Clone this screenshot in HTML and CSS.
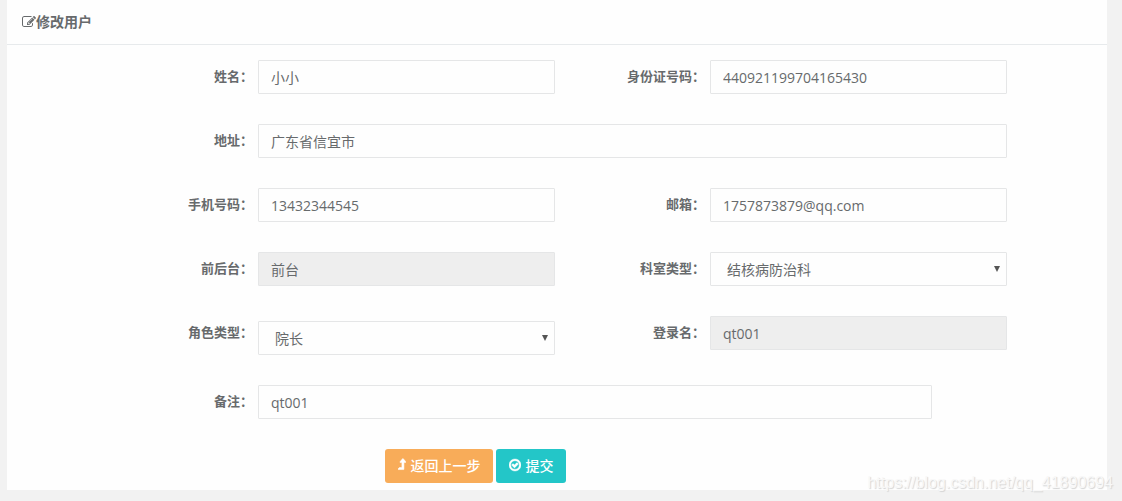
FILE: index.html
```html
<!DOCTYPE html>
<html lang="zh-CN">
<head>
<meta charset="utf-8">
<title>修改用户</title>
<link rel="stylesheet" href="styles.css">
</head>
<body>
<main class="panel">
  <header class="panel-head">
    <svg class="icon icon-edit" viewBox="0 0 1792 1792" aria-hidden="true"><path d="M888 1184l116-116-152-152-116 116v56h96v96h56zm440-720q-16-16-33 1l-350 350q-17 17-1 33t33-1l350-350q17-17 1-33zm80 594v190q0 119-84.5 203.5t-203.5 84.5h-832q-119 0-203.5-84.5t-84.5-203.5v-832q0-119 84.5-203.5t203.5-84.5h832q63 0 117 25 15 7 18 23 3 17-9 29l-49 49q-14 14-32 8-23-6-45-6h-832q-66 0-113 47t-47 113v832q0 66 47 113t113 47h832q66 0 113-47t47-113v-126q0-13 9-22l64-64q15-15 35-7t20 29zm-96-738l288 288-672 672h-288v-288zm444 132l-92 92-288-288 92-92q28-28 68-28t68 28l152 152q28 28 28 68t-28 68z"/></svg>
    <h1 class="title">修改用户</h1>
  </header>
  <form class="form">
    <div class="row">
      <label class="label" for="name">姓名：</label>
      <input class="control" id="name" type="text" value="小小">
      <label class="label" for="idcard">身份证号码：</label>
      <input class="control" id="idcard" type="text" value="440921199704165430">
    </div>
    <div class="row">
      <label class="label" for="address">地址：</label>
      <input class="control wide" id="address" type="text" value="广东省信宜市">
    </div>
    <div class="row">
      <label class="label" for="phone">手机号码：</label>
      <input class="control" id="phone" type="text" value="13432344545">
      <label class="label" for="email">邮箱：</label>
      <input class="control" id="email" type="text" value="1757873879@qq.com">
    </div>
    <div class="row">
      <label class="label" for="side">前后台：</label>
      <input class="control" id="side" type="text" value="前台" readonly>
      <label class="label" for="dept">科室类型：</label>
      <div class="select-box">
        <select class="control select" id="dept"><option>结核病防治科</option></select>
      </div>
    </div>
    <div class="row">
      <label class="label" for="role">角色类型：</label>
      <div class="select-box lowered">
        <select class="control select" id="role"><option>院长</option></select>
      </div>
      <label class="label" for="login">登录名：</label>
      <input class="control" id="login" type="text" value="qt001" readonly>
    </div>
    <div class="row">
      <label class="label" for="remark">备注：</label>
      <input class="control wide remark" id="remark" type="text" value="qt001">
    </div>
    <div class="actions">
      <button class="btn btn-back" type="button"><svg class="icon icon-up" viewBox="330 0 1024 1792" aria-hidden="true"><path d="M1337 547q-18 37-58 37h-192v864q0 14-9 23t-23 9h-704q-21 0-29-18-8-20 4-35l160-192q9-11 25-11h320v-640h-192q-40 0-58-37-17-37 9-68l320-384q18-22 49-22t49 22l320 384q27 32 9 68z"/></svg>返回上一步</button>
      <button class="btn btn-submit" type="submit"><svg class="icon icon-check" viewBox="128 0 1536 1792" aria-hidden="true"><path d="M1299 813l-422 422q-19 19-45 19t-45-19l-294-294q-19-19-19-45t19-45l102-102q19-19 45-19t45 19l147 147 275-275q19-19 45-19t45 19l102 102q19 19 19 45t-19 45zm141 83q0-148-73-273t-198-198-273-73-273 73-198 198-73 273 73 273 198 198 273 73 273-73 198-198 73-273zm224 0q0 209-103 385.5t-279.5 279.5-385.5 103-385.5-103-279.5-279.5-103-385.5 103-385.5 279.5-279.5 385.5-103 385.5 103 279.5 279.5 103 385.5z"/></svg>提交</button>
    </div>
  </form>
</main>
<div class="watermark">https://blog.csdn.net/qq_41890694</div>
</body>
</html>
```
FILE: styles.css
```css
* {
  box-sizing: border-box;
}

body {
  position: relative;
  margin: 0;
  padding: 0 15px 11px 7px;
  background: #f2f2f2;
  color: #676a6c;
  font-family: "Open Sans", "Noto Sans CJK SC", sans-serif;
  font-size: 14px;
}

.panel {
  background: #fefefe;
}

.panel-head {
  display: flex;
  align-items: center;
  height: 45px;
  padding: 0 15px;
  border-bottom: 1px solid #e7eaec;
}

.title {
  margin: 0;
  font-size: 14px;
  font-weight: 600;
  line-height: 20px;
}

.icon {
  flex: none;
  height: 14px;
  fill: currentColor;
}

.icon-edit {
  width: 14px;
}

.form {
  display: flex;
  flex-direction: column;
  gap: 30px;
  padding: 15px 0 7px;
}

.row {
  display: grid;
  grid-template-columns: 251fr 297fr 155fr 297fr 100fr;
  align-items: start;
}

.label {
  padding: 6px 5px 0 0;
  font-size: 13px;
  font-weight: 700;
  line-height: 20px;
  text-align: right;
}

.control {
  width: 100%;
  min-width: 0;
  height: 34px;
  padding: 0 12px;
  border: 1px solid #e5e6e7;
  border-radius: 1px;
  background: #fefefe;
  color: inherit;
  font: inherit;
}

.control:read-only:not(.select) {
  background: #eee;
}

.wide {
  grid-column: 2 / 5;
}

.remark {
  width: 90%;
}

.select-box {
  position: relative;
}

.select-box::after {
  content: "";
  position: absolute;
  top: 14px;
  right: 7px;
  border: solid transparent;
  border-width: 6px 3px 0;
  border-top-color: #555;
  pointer-events: none;
}

.lowered {
  margin-top: 5px;
}

.select {
  display: block;
  padding: 0 16px;
  appearance: none;
}

.actions {
  display: flex;
  gap: 3px;
  margin-left: 34.4%;
}

.btn {
  display: flex;
  align-items: center;
  gap: 4px;
  height: 34px;
  padding: 0 13px 2px;
  border: 0;
  border-radius: 3px;
  color: #fff;
  font: inherit;
  font-weight: 500;
}

.btn-back {
  background: #f8ac59;
}

.btn-submit {
  background: #23c6c8;
}

.icon-up {
  width: 8px;
  stroke: currentColor;
  stroke-width: 70;
}

.icon-check {
  width: 12px;
  stroke: currentColor;
  stroke-width: 50;
}

.watermark {
  position: absolute;
  right: 9px;
  bottom: 8px;
  color: #f8f8f8;
  font-family: "Liberation Sans", Arial, sans-serif;
  font-size: 16px;
  line-height: 20px;
  text-shadow: 1px 1px 1px #d4d4d4;
  pointer-events: none;
}
```
